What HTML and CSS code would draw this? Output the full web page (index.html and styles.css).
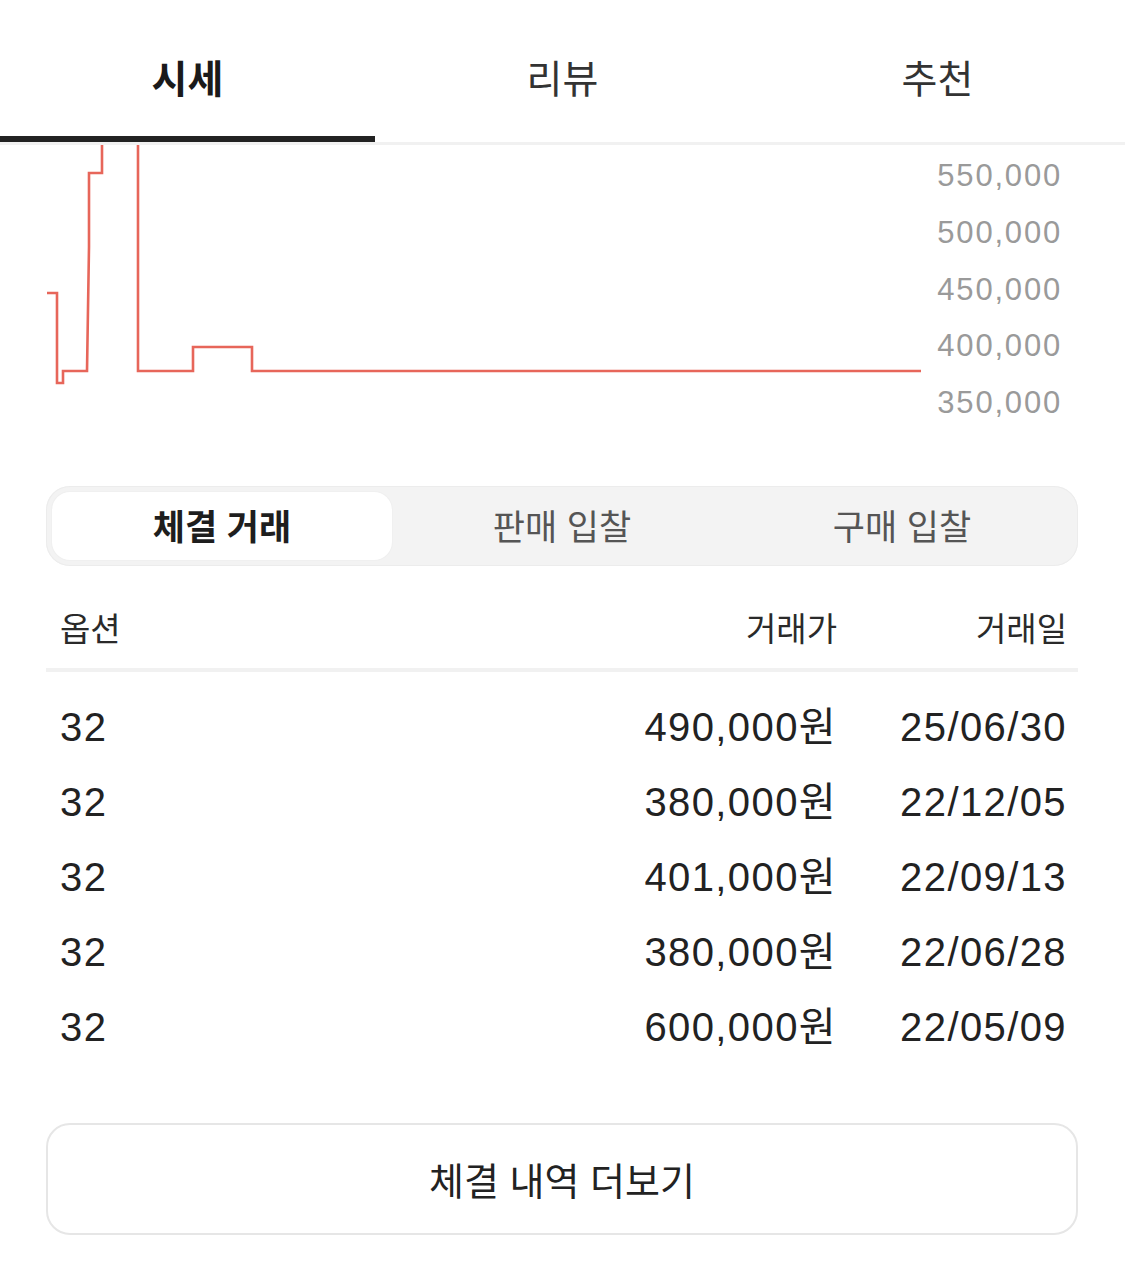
FILE: index.html
```html
<!DOCTYPE html>
<html lang="ko">
<head>
<meta charset="utf-8">
<title>시세</title>
<link rel="stylesheet" href="styles.css">
</head>
<body>
<div class="page">
  <nav class="tabs">
    <div class="tab active">시세</div>
    <div class="tab">리뷰</div>
    <div class="tab">추천</div>
  </nav>

  <section class="chart">
    <svg class="plot" width="930" height="300" viewBox="0 0 930 300">
      <path class="line" d="M47 148 H57 V238 H63 V226 H87 L89 102 V28 H102 V-10" />
      <path class="line" d="M138 -10 V226 H193 V202 H252 V226 H921" />
    </svg>
    <div class="axis">
      <span>550,000</span>
      <span>500,000</span>
      <span>450,000</span>
      <span>400,000</span>
      <span>350,000</span>
    </div>
  </section>

  <div class="segmented">
    <div class="seg active">체결 거래</div>
    <div class="seg">판매 입찰</div>
    <div class="seg">구매 입찰</div>
  </div>

  <div class="table">
    <div class="row head">
      <span>옵션</span>
      <span class="num">거래가</span>
      <span class="num">거래일</span>
    </div>
    <div class="body">
      <div class="row"><span>32</span><span class="num">490,000원</span><span class="num">25/06/30</span></div>
      <div class="row"><span>32</span><span class="num">380,000원</span><span class="num">22/12/05</span></div>
      <div class="row"><span>32</span><span class="num">401,000원</span><span class="num">22/09/13</span></div>
      <div class="row"><span>32</span><span class="num">380,000원</span><span class="num">22/06/28</span></div>
      <div class="row"><span>32</span><span class="num">600,000원</span><span class="num">22/05/09</span></div>
    </div>
  </div>

  <button class="more">체결 내역 더보기</button>
</div>
</body>
</html>
```

FILE: styles.css
```css
* { box-sizing: border-box; }

html, body {
  margin: 0;
  padding: 0;
  background: #ffffff;
}

body {
  font-family: "Liberation Sans", "Noto Sans CJK KR", sans-serif;
  color: #222222;
}

.page {
  width: 1125px;
  display: flex;
  flex-direction: column;
}

/* top tabs */
.tabs {
  display: grid;
  grid-template-columns: repeat(3, 1fr);
  border-bottom: 3px solid #f1f1f1;
}

.tab {
  height: 142px;
  padding-top: 23px;
  line-height: 113px;
  text-align: center;
  font-size: 39px;
  color: #333333;
  border-bottom: 6px solid transparent;
}

.tab.active {
  font-weight: 700;
  color: #1a1a1a;
  border-bottom-color: #222222;
}

/* chart */
.chart {
  display: flex;
  height: 300px;
}

.plot {
  display: block;
  overflow: hidden;
  flex: none;
}

.line {
  fill: none;
  stroke: #e7665a;
  stroke-width: 2.6;
}

.axis {
  flex: 1;
  display: flex;
  flex-direction: column;
  align-items: flex-end;
  padding: 3px 63px 0 0;
  font-size: 31px;
  letter-spacing: 1.8px;
  color: #9a9a9a;
}

.axis span {
  line-height: 56.75px;
}

/* segmented control */
.segmented {
  margin: 41px 47px 0 46px;
  height: 80px;
  padding: 6px;
  border-radius: 24px;
  background: #f3f3f3;
  box-shadow: inset 0 0 0 1px #ececec;
  display: grid;
  grid-template-columns: repeat(3, 1fr);
}

.seg {
  display: flex;
  align-items: center;
  justify-content: center;
  padding-bottom: 4px;
  font-size: 35px;
  color: #555555;
  border-radius: 18px;
}

.seg.active {
  background: #ffffff;
  color: #1e1e1e;
  font-weight: 700;
  box-shadow: 0 0 2px rgba(0, 0, 0, 0.06);
}

/* table */
.table {
  margin: 0 47px 0 46px;
}

.row {
  display: grid;
  grid-template-columns: 1fr 300px 230px;
  padding: 0 11px 0 14px;
  height: 75px;
  line-height: 75px;
  font-size: 40px;
  letter-spacing: 1.4px;
  color: #222222;
}

.row .num {
  text-align: right;
}

.row.head {
  height: 106px;
  padding-top: 46px;
  line-height: 36px;
  font-size: 33px;
  letter-spacing: 0;
  color: #2a2a2a;
  border-bottom: 4px solid #f1f1f1;
}

.body {
  padding-top: 18px;
}

/* more button */
.more {
  margin: 58px 47px 0 46px;
  height: 112px;
  padding-bottom: 3px;
  border: 2px solid #e6e6e6;
  border-radius: 24px;
  background: #ffffff;
  font-family: "Liberation Sans", "Noto Sans CJK KR", sans-serif;
  font-size: 38px;
  color: #222222;
  cursor: pointer;
}
```
